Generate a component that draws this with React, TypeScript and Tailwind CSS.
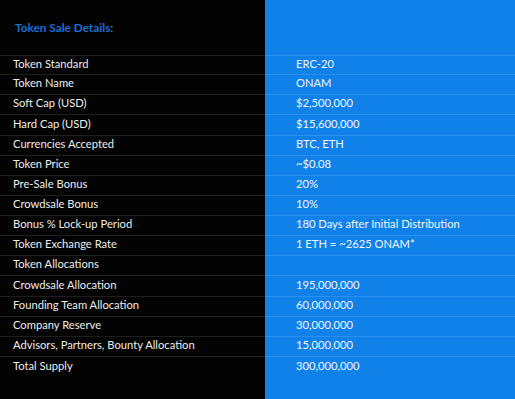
const ROWS: Array<[string, string]> = [
  ["Token Standard", "ERC-20"],
  ["Token Name", "ONAM"],
  ["Soft Cap (USD)", "$2,500,000"],
  ["Hard Cap (USD)", "$15,600,000"],
  ["Currencies Accepted", "BTC, ETH"],
  ["Token Price", "~$0.08"],
  ["Pre-Sale Bonus", "20%"],
  ["Crowdsale Bonus", "10%"],
  ["Bonus % Lock-up Period", "180 Days after Initial Distribution"],
  ["Token Exchange Rate", "1 ETH = ~2625 ONAM*"],
  ["Token Allocations", ""],
  ["Crowdsale Allocation", "195,000,000"],
  ["Founding Team Allocation", "60,000,000"],
  ["Company Reserve", "30,000,000"],
  ["Advisors, Partners, Bounty Allocation", "15,000,000"],
  ["Total Supply", "300,000,000"],
];

export default function App() {
  return (
    <div
      className="flex h-[399px] w-[515px] overflow-hidden text-[11.2px] text-[#ececec]"
      style={{ fontFamily: 'Lato, "Liberation Sans", sans-serif' }}
    >
      {/* label column */}
      <div className="flex w-[265px] flex-col bg-[#030303]">
        <div className="flex h-[55px] items-start pl-[15px] pt-[19px]">
          <span className="text-[11.8px] font-bold text-[#1b6fd3]">Token Sale Details:</span>
        </div>
        {ROWS.map(([label], i) => (
          <div
            key={label}
            className={`flex h-[20.13px] items-center pb-[2px] pl-[13px] ${
              i === 0 ? "border-t border-[#1e1e1e]" : ""
            } ${i < ROWS.length - 1 ? "border-b border-[#1e1e1e]" : ""}`}
          >
            {label}
          </div>
        ))}
      </div>

      {/* value column */}
      <div className="flex flex-1 flex-col bg-[#1181ea]">
        <div className="h-[55px]" />
        {ROWS.map(([label, value], i) => (
          <div
            key={label}
            className={`flex h-[20.13px] items-center pb-[2px] pl-[31px] text-[#f2f6ff] ${
              i === 0 ? "border-t border-[#2b8ff0]" : ""
            } ${i < ROWS.length - 1 ? "border-b border-[#2b8ff0]" : ""}`}
          >
            {value}
          </div>
        ))}
      </div>
    </div>
  );
}
